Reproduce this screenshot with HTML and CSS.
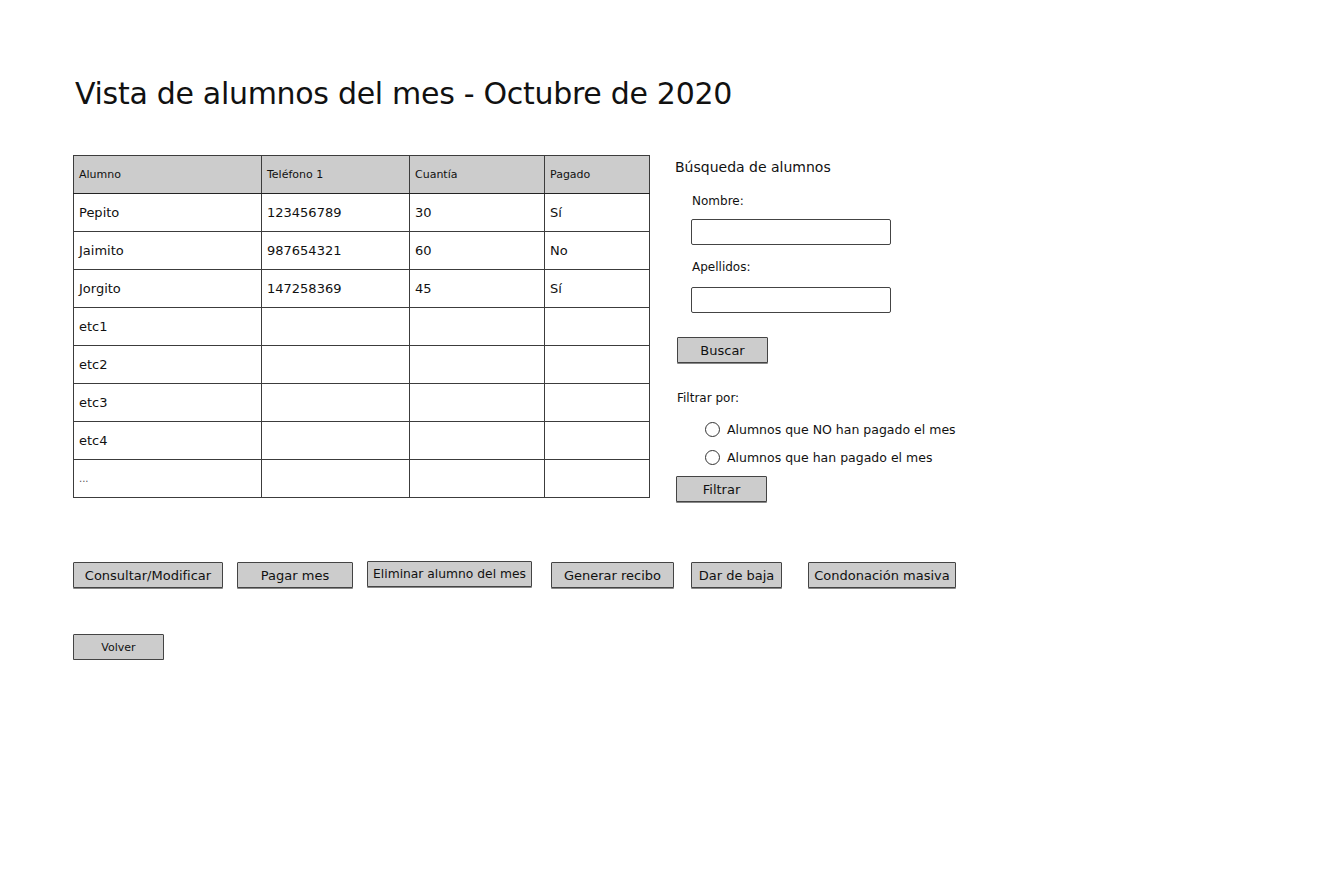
FILE: index.html
```html
<!DOCTYPE html>
<html lang="es">

<head>
  <meta charset="UTF-8" />
  <title>Vista de alumnos del mes</title>
  <meta name="viewport" content="width=device-width, initial-scale=1.0" />
  <link rel="stylesheet" href="styles.css">
</head>

<body>

  <h1 class="title">Vista de alumnos del mes - Octubre de 2020</h1>

  <div class="main">
    <!-- Tabla de alumnos -->
    <table class="students">
      <thead>
        <tr>
          <th class="col-name">Alumno</th>
          <th class="col-phone">Teléfono 1</th>
          <th class="col-amount">Cuantía</th>
          <th class="col-paid">Pagado</th>
        </tr>
      </thead>
      <tbody>
        <tr><td>Pepito</td><td>123456789</td><td>30</td><td>Sí</td></tr>
        <tr><td>Jaimito</td><td>987654321</td><td>60</td><td>No</td></tr>
        <tr><td>Jorgito</td><td>147258369</td><td>45</td><td>Sí</td></tr>
        <tr><td>etc1</td><td></td><td></td><td></td></tr>
        <tr><td>etc2</td><td></td><td></td><td></td></tr>
        <tr><td>etc3</td><td></td><td></td><td></td></tr>
        <tr><td>etc4</td><td></td><td></td><td></td></tr>
        <tr><td class="dots">...</td><td></td><td></td><td></td></tr>
      </tbody>
    </table>

    <!-- Busqueda -->
    <div class="search-panel">
      <div class="panel-title">Búsqueda de alumnos</div>

      <div class="field">
        <label class="field-label">Nombre:</label>
        <input type="text" class="text-input">
      </div>

      <div class="field">
        <label class="field-label">Apellidos:</label>
        <input type="text" class="text-input">
      </div>

      <button class="btn btn-small btn-search">Buscar</button>

      <div class="filter-title">Filtrar por:</div>
      <label class="radio-row">
        <span class="radio"></span>
        Alumnos que NO han pagado el mes
      </label>
      <label class="radio-row">
        <span class="radio"></span>
        Alumnos que han pagado el mes
      </label>

      <button class="btn btn-small btn-filter">Filtrar</button>
    </div>
  </div>

  <div class="actions">
    <button class="btn btn-consult">Consultar/Modificar</button>
    <button class="btn btn-pay">Pagar mes</button>
    <button class="btn btn-delete">Eliminar alumno del mes</button>
    <button class="btn btn-receipt">Generar recibo</button>
    <button class="btn btn-drop">Dar de baja</button>
    <button class="btn btn-forgive">Condonación masiva</button>
  </div>

  <div class="back">
    <button class="btn btn-small btn-back">Volver</button>
  </div>

</body>

</html>
```

FILE: styles.css
```css
:root {
  --text: #111111;
  --line: #3c3c3c;
  --grey: #cccccc;
}

body {
  margin: 0;
  padding: 0 0 0 73px;
  font-family: "Comic Sans MS", "DejaVu Sans", sans-serif;
  color: var(--text);
  background: #ffffff;
}

.title {
  margin: 72px 0 0 2px;
  font-size: 30px;
  font-weight: normal;
  letter-spacing: -0.3px;
  line-height: 44px;
}

.main {
  display: flex;
  align-items: flex-start;
  gap: 24px;
  margin-top: 39px;
}

/* Tabla */
.students {
  border-collapse: collapse;
  border: 1px solid #222;
  table-layout: fixed;
  width: 576px;
}

.students th,
.students td {
  border: 1px solid var(--line);
  height: 37px;
  padding: 0 5px;
  text-align: left;
  font-weight: normal;
  white-space: nowrap;
}

.students th {
  background-color: var(--grey);
  font-size: 11px;
  border-bottom: 1px solid #222;
}

.students td {
  font-size: 13px;
}

.students .dots {
  font-size: 10px;
  color: #555;
}

.col-name { width: 177px; }
.col-phone { width: 137px; }
.col-amount { width: 124px; }
.col-paid { width: 94px; }

/* Panel de busqueda */
.search-panel {
  display: flex;
  flex-direction: column;
  align-items: flex-start;
  padding-top: 2px;
}

.panel-title {
  font-size: 14px;
  margin-left: 1px;
  line-height: 20px;
}

.field {
  display: flex;
  flex-direction: column;
  margin-left: 17px;
}

.field-label {
  font-size: 12px;
  margin: 16px 0 0 1px;
  line-height: 16px;
}

.text-input {
  width: 200px;
  height: 26px;
  box-sizing: border-box;
  margin-top: 10px;
  border: 1px solid #444;
  border-radius: 2px;
  background: #ffffff;
}

.field + .field .field-label {
  margin-top: 14px;
}

.field + .field .text-input {
  margin-top: 12px;
}

.btn {
  font-family: inherit;
  font-size: 13px;
  color: var(--text);
  background-color: var(--grey);
  border: 1px solid #444;
  border-radius: 1px;
  height: 26px;
  padding: 0;
  box-shadow: 0 1px 0 #888;
  cursor: pointer;
}

.btn-small {
  width: 91px;
}

.btn-search {
  margin: 24px 0 0 3px;
}

.filter-title {
  font-size: 12px;
  margin: 27px 0 0 3px;
  line-height: 16px;
}

.radio-row {
  display: flex;
  align-items: center;
  gap: 7px;
  font-size: 12.5px;
  margin-left: 31px;
  height: 28px;
}

.radio-row:first-of-type {
  margin-top: 9px;
}

.radio {
  width: 13px;
  height: 13px;
  border: 1px solid #333;
  border-radius: 50%;
  background: #fff;
}

.btn-filter {
  margin: 5px 0 0 2px;
}

/* Botones de acciones */
.actions {
  display: flex;
  align-items: center;
  margin-top: 60px;
}

.btn-consult { width: 150px; }
.btn-pay { width: 116px; margin-left: 14px; }
.btn-delete { width: 165px; margin-left: 14px; margin-top: -2px; font-size: 12.3px; }
.btn-receipt { width: 123px; margin-left: 19px; }
.btn-drop { width: 91px; margin-left: 17px; }
.btn-forgive { width: 148px; margin-left: 26px; }

.back {
  margin-top: 46px;
}

.btn-back {
  font-size: 11px;
}
```
